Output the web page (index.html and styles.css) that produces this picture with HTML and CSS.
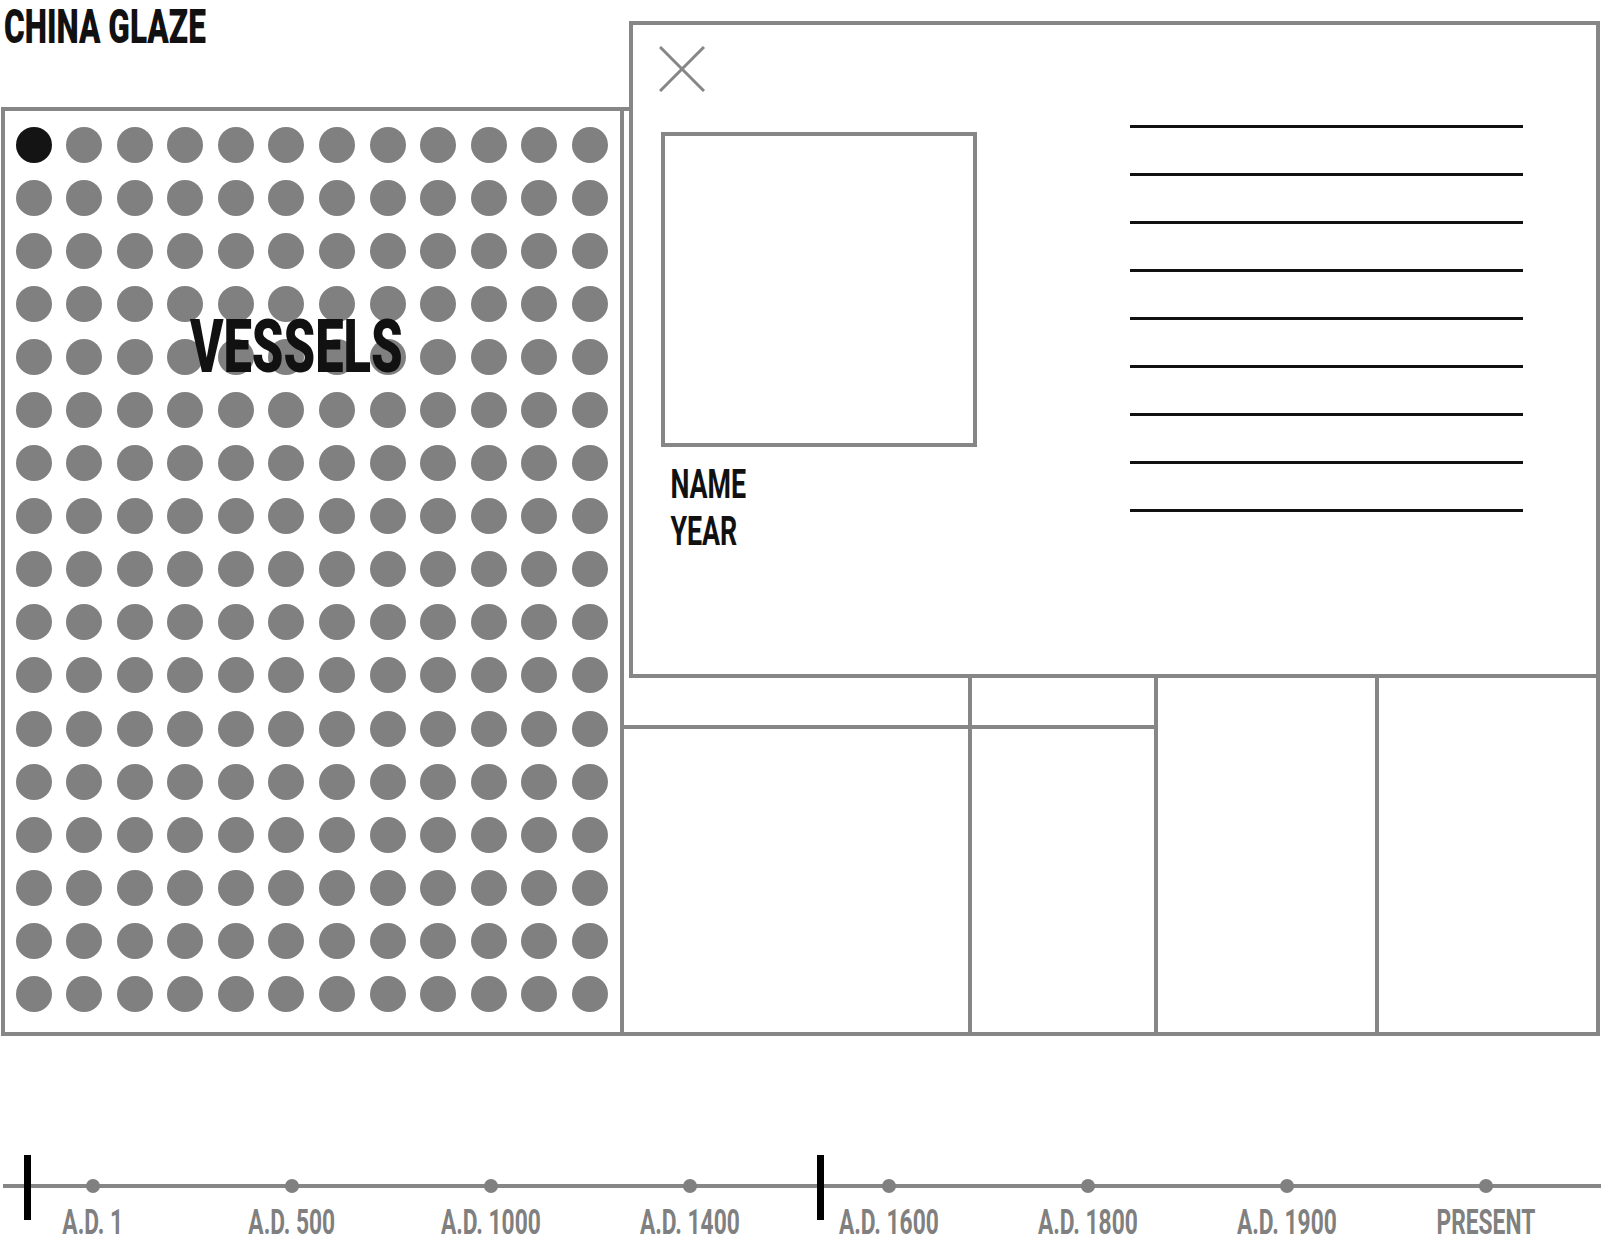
FILE: index.html
```html
<!DOCTYPE html>
<html>
  <head>
    <title>China Glaze</title>
    <link rel="stylesheet" href="styles.css">
  </head>
  <body>
    <div class="page">
      <div class="header">
        <h1 class="title">CHINA GLAZE</h1>
      </div>

      <div class="board">
        <div class="vessels">
          <span class="dot active"></span><span class="dot"></span><span class="dot"></span><span class="dot"></span><span class="dot"></span><span class="dot"></span><span class="dot"></span><span class="dot"></span><span class="dot"></span><span class="dot"></span><span class="dot"></span><span class="dot"></span>
          <span class="dot"></span><span class="dot"></span><span class="dot"></span><span class="dot"></span><span class="dot"></span><span class="dot"></span><span class="dot"></span><span class="dot"></span><span class="dot"></span><span class="dot"></span><span class="dot"></span><span class="dot"></span>
          <span class="dot"></span><span class="dot"></span><span class="dot"></span><span class="dot"></span><span class="dot"></span><span class="dot"></span><span class="dot"></span><span class="dot"></span><span class="dot"></span><span class="dot"></span><span class="dot"></span><span class="dot"></span>
          <span class="dot"></span><span class="dot"></span><span class="dot"></span><span class="dot"></span><span class="dot"></span><span class="dot"></span><span class="dot"></span><span class="dot"></span><span class="dot"></span><span class="dot"></span><span class="dot"></span><span class="dot"></span>
          <span class="dot"></span><span class="dot"></span><span class="dot"></span><span class="dot"></span><span class="dot"></span><span class="dot"></span><span class="dot"></span><span class="dot"></span><span class="dot"></span><span class="dot"></span><span class="dot"></span><span class="dot"></span>
          <span class="dot"></span><span class="dot"></span><span class="dot"></span><span class="dot"></span><span class="dot"></span><span class="dot"></span><span class="dot"></span><span class="dot"></span><span class="dot"></span><span class="dot"></span><span class="dot"></span><span class="dot"></span>
          <span class="dot"></span><span class="dot"></span><span class="dot"></span><span class="dot"></span><span class="dot"></span><span class="dot"></span><span class="dot"></span><span class="dot"></span><span class="dot"></span><span class="dot"></span><span class="dot"></span><span class="dot"></span>
          <span class="dot"></span><span class="dot"></span><span class="dot"></span><span class="dot"></span><span class="dot"></span><span class="dot"></span><span class="dot"></span><span class="dot"></span><span class="dot"></span><span class="dot"></span><span class="dot"></span><span class="dot"></span>
          <span class="dot"></span><span class="dot"></span><span class="dot"></span><span class="dot"></span><span class="dot"></span><span class="dot"></span><span class="dot"></span><span class="dot"></span><span class="dot"></span><span class="dot"></span><span class="dot"></span><span class="dot"></span>
          <span class="dot"></span><span class="dot"></span><span class="dot"></span><span class="dot"></span><span class="dot"></span><span class="dot"></span><span class="dot"></span><span class="dot"></span><span class="dot"></span><span class="dot"></span><span class="dot"></span><span class="dot"></span>
          <span class="dot"></span><span class="dot"></span><span class="dot"></span><span class="dot"></span><span class="dot"></span><span class="dot"></span><span class="dot"></span><span class="dot"></span><span class="dot"></span><span class="dot"></span><span class="dot"></span><span class="dot"></span>
          <span class="dot"></span><span class="dot"></span><span class="dot"></span><span class="dot"></span><span class="dot"></span><span class="dot"></span><span class="dot"></span><span class="dot"></span><span class="dot"></span><span class="dot"></span><span class="dot"></span><span class="dot"></span>
          <span class="dot"></span><span class="dot"></span><span class="dot"></span><span class="dot"></span><span class="dot"></span><span class="dot"></span><span class="dot"></span><span class="dot"></span><span class="dot"></span><span class="dot"></span><span class="dot"></span><span class="dot"></span>
          <span class="dot"></span><span class="dot"></span><span class="dot"></span><span class="dot"></span><span class="dot"></span><span class="dot"></span><span class="dot"></span><span class="dot"></span><span class="dot"></span><span class="dot"></span><span class="dot"></span><span class="dot"></span>
          <span class="dot"></span><span class="dot"></span><span class="dot"></span><span class="dot"></span><span class="dot"></span><span class="dot"></span><span class="dot"></span><span class="dot"></span><span class="dot"></span><span class="dot"></span><span class="dot"></span><span class="dot"></span>
          <span class="dot"></span><span class="dot"></span><span class="dot"></span><span class="dot"></span><span class="dot"></span><span class="dot"></span><span class="dot"></span><span class="dot"></span><span class="dot"></span><span class="dot"></span><span class="dot"></span><span class="dot"></span>
          <span class="dot"></span><span class="dot"></span><span class="dot"></span><span class="dot"></span><span class="dot"></span><span class="dot"></span><span class="dot"></span><span class="dot"></span><span class="dot"></span><span class="dot"></span><span class="dot"></span><span class="dot"></span>

          <h2 class="vessels-label">VESSELS</h2>
        </div>

        <div class="cell cell-a1"></div>
        <div class="cell cell-b1"></div>
        <div class="cell cell-c"></div>
        <div class="cell cell-d"></div>
        <div class="cell cell-a2"></div>
        <div class="cell cell-b2"></div>
      </div>

      <div class="modal">
        <svg class="close" width="46" height="46" viewBox="0 0 46 46">
          <line x1="1" y1="1" x2="45" y2="45" />
          <line x1="45" y1="1" x2="1" y2="45" />
        </svg>

        <div class="modal-body">
          <div class="modal-info">
            <div class="photo"></div>
            <p class="caption">NAME<br>YEAR</p>
          </div>
          <div class="text-lines">
            <span class="text-line"></span>
            <span class="text-line"></span>
            <span class="text-line"></span>
            <span class="text-line"></span>
            <span class="text-line"></span>
            <span class="text-line"></span>
            <span class="text-line"></span>
            <span class="text-line"></span>
            <span class="text-line"></span>
          </div>
        </div>
      </div>

      <div class="timeline">
        <span class="handle handle-start"></span>
        <span class="handle handle-end"></span>
        <div class="stops">
          <div class="stop"><span class="stop-dot"></span><span class="stop-label">A.D. 1</span></div>
          <div class="stop"><span class="stop-dot"></span><span class="stop-label">A.D. 500</span></div>
          <div class="stop"><span class="stop-dot"></span><span class="stop-label">A.D. 1000</span></div>
          <div class="stop"><span class="stop-dot"></span><span class="stop-label">A.D. 1400</span></div>
          <div class="stop"><span class="stop-dot"></span><span class="stop-label">A.D. 1600</span></div>
          <div class="stop"><span class="stop-dot"></span><span class="stop-label">A.D. 1800</span></div>
          <div class="stop"><span class="stop-dot"></span><span class="stop-label">A.D. 1900</span></div>
          <div class="stop"><span class="stop-dot"></span><span class="stop-label">PRESENT</span></div>
        </div>
      </div>
    </div>
  </body>
</html>
```

FILE: styles.css
```css
body {
  margin: 0;
  background-color: #fff;
  font-family: Roboto, "Liberation Sans", sans-serif;
  color: #111;
}
.page {
  position: relative;
  width: 1601px;
}

/* condensed display type */
.title,
.vessels-label,
.caption,
.stop-label {
  display: inline-block;
  margin: 0;
  line-height: 1;
  white-space: nowrap;
}

.header {
  height: 107px;
  padding: 2px 0 0 4px;
  box-sizing: border-box;
}
.title {
  font-size: 49px;
  font-weight: 900;
  transform: scaleX(0.645);
  transform-origin: left top;
}

/* main board */
.board {
  display: grid;
  grid-template-columns: 615px 344px 182px 217px 217px;
  grid-template-rows: 614px 303px;
  gap: 4px;
  width: 1599px;
  margin-left: 1px;
  border: 4px solid #868686;
  box-sizing: border-box;
  background-color: #868686;
}
.cell,
.vessels {
  background-color: #fff;
}
.vessels {
  position: relative;
  grid-row: 1 / 3;
  display: grid;
  grid-template-columns: repeat(12, 36px);
  grid-auto-rows: 36px;
  column-gap: 14.6px;
  row-gap: 17.1px;
  padding: 15.5px 0 0 10.5px;
}
.dot {
  width: 36px;
  height: 36px;
  border-radius: 50%;
  background-color: #808080;
}
.dot.active {
  background-color: #141414;
}
.vessels-label {
  position: absolute;
  top: 199px;
  left: 185px;
  font-size: 74.5px;
  font-weight: 900;
  transform: scaleX(0.68);
  transform-origin: left top;
}
.cell-c {
  grid-column: 4;
  grid-row: 1 / 3;
}
.cell-d {
  grid-column: 5;
  grid-row: 1 / 3;
}
.cell-a2 {
  grid-column: 2;
  grid-row: 2;
}
.cell-b2 {
  grid-column: 3;
  grid-row: 2;
}

/* detail modal */
.modal {
  position: absolute;
  top: 21px;
  left: 629px;
  width: 971px;
  height: 657px;
  padding: 21px 0 0 28px;
  border: 4px solid #868686;
  box-sizing: border-box;
  background-color: #fff;
}
.close {
  display: block;
  margin-left: -2px;
}
.close line {
  stroke: #868686;
  stroke-width: 3;
}
.modal-body {
  display: flex;
  align-items: flex-start;
  margin-top: 33px;
}
.photo {
  width: 316px;
  height: 315px;
  margin-top: 7px;
  border: 4px solid #868686;
  box-sizing: border-box;
}
.caption {
  display: block;
  margin-top: 14px;
  padding-left: 14px;
  font-size: 40px;
  font-weight: 700;
  line-height: 47px;
  transform: scaleX(0.67);
  transform-origin: left top;
}
.text-lines {
  display: flex;
  flex-direction: column;
  gap: 45px;
  margin-left: 153px;
}
.text-line {
  display: block;
  width: 393px;
  height: 3px;
  background-color: #111;
}

/* timeline */
.timeline {
  position: relative;
  margin-top: 143px;
}
.timeline::before {
  content: "";
  position: absolute;
  top: 5px;
  left: 3px;
  right: 0;
  height: 4px;
  background-color: #868686;
}
.handle {
  position: absolute;
  top: -24px;
  width: 7px;
  height: 65px;
  background-color: #000;
  z-index: 1;
}
.handle-start {
  left: 24px;
}
.handle-end {
  left: 817px;
}
.stops {
  display: flex;
  gap: 79px;
  padding-left: 33px;
}
.stop {
  position: relative;
  display: flex;
  flex-direction: column;
  align-items: center;
  width: 120px;
}
.stop-dot {
  width: 14px;
  height: 14px;
  border-radius: 50%;
  background-color: #808080;
}
.stop-label {
  margin-top: 12px;
  font-size: 35px;
  font-weight: 700;
  color: #808080;
  transform: scaleX(0.65);
}
```
